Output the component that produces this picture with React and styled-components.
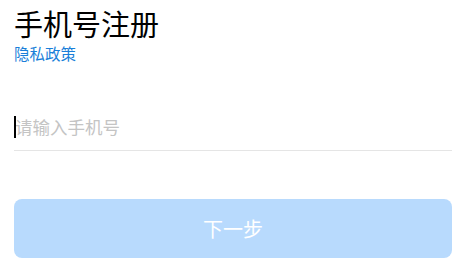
import styled, { createGlobalStyle } from "styled-components";

const GlobalStyle = createGlobalStyle`
    html, body {
        margin: 0;
        padding: 0;
        background: #ffffff;
    }
    body {
        font-family: "Noto Sans CJK SC", "Noto Sans", sans-serif;
    }
`;

const Page = styled.div`
    display: flex;
    flex-direction: column;
    padding: 5px 14px 0;
`;

const Title = styled.h1`
    margin: 0;
    font-size: 29px;
    line-height: 36px;
    font-weight: 400;
    color: #000000;
`;

const PolicyLink = styled.a`
    align-self: flex-start;
    margin-top: 2px;
    font-size: 15.5px;
    line-height: 20px;
    color: #1a7fd9;
    text-decoration: none;
    cursor: pointer;
`;

const Field = styled.div`
    position: relative;
    display: flex;
    align-items: center;
    margin-top: 46px;
    height: 41px;
    border-bottom: 1px solid #e5e5e5;
`;

const PhoneInput = styled.input`
    flex: 1;
    border: none;
    outline: none;
    padding: 0 0 6px 1px;
    font-family: inherit;
    font-size: 17.5px;
    color: #333333;
    background: transparent;
    caret-color: transparent;

    &::placeholder {
        color: #c4c4c4;
    }
`;

const Caret = styled.span`
    position: absolute;
    left: 0;
    top: 7px;
    width: 2px;
    height: 22px;
    background: #000000;
`;

const NextButton = styled.button`
    margin-top: 48px;
    height: 59px;
    border: none;
    border-radius: 8px;
    background: #b8dafd;
    color: #ffffff;
    font-family: inherit;
    font-size: 20px;
    cursor: not-allowed;
`;

const App = () => {
    return (
        <>
            <GlobalStyle />
            <Page>
                <Title>手机号注册</Title>
                <PolicyLink>隐私政策</PolicyLink>
                <Field>
                    <Caret />
                    <PhoneInput placeholder="请输入手机号" type="tel" />
                </Field>
                <NextButton disabled>下一步</NextButton>
            </Page>
        </>
    );
};

export default App;
